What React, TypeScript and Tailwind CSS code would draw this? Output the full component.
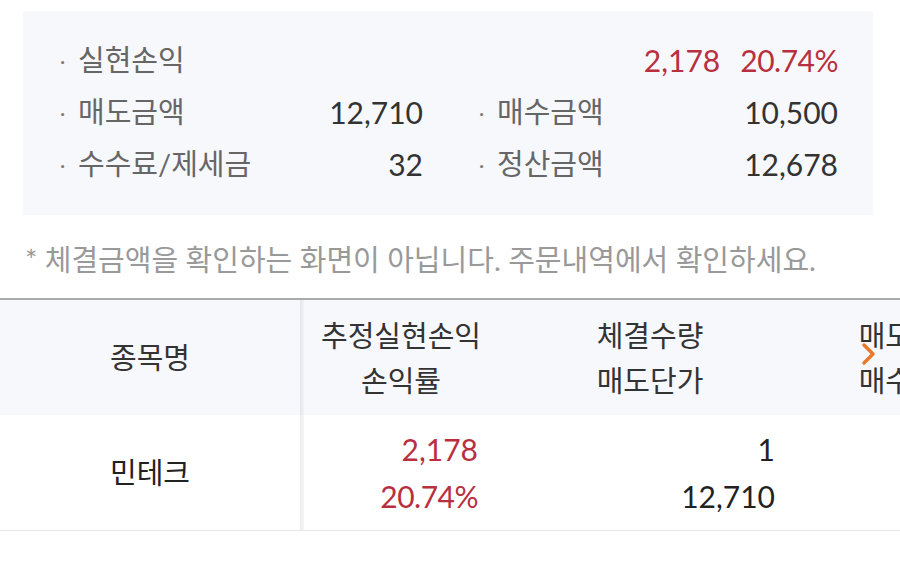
const font = { fontFamily: 'Lato, "Noto Sans CJK KR", sans-serif' };

function SummaryItem({ label, value }: { label: string; value: React.ReactNode }) {
  return (
    <div className="flex items-center h-[52px]">
      <span className="w-[18px] text-[#777] text-[20px]">·</span>
      <span className="text-[#666]">{label}</span>
      <span className="ml-auto text-[#333] text-[30px]">{value}</span>
    </div>
  );
}

export default function App() {
  return (
    <div className="w-[900px] h-[568px] bg-white overflow-hidden text-[29px]" style={font}>
      <div className="pt-[11px] px-[23px]">
        <div className="bg-[#f7f8fc] w-[850px] pt-[23px] pb-[25px] pl-[37px] pr-[35px]">
          <div className="flex items-center h-[52px]">
            <span className="w-[18px] text-[#777] text-[20px]">·</span>
            <span className="text-[#666]">실현손익</span>
            <span className="ml-auto text-[#b8303f] text-[30px]">2,178</span>
            <span className="ml-[20px] text-[#b8303f] text-[30px] tracking-[-0.5px]">20.74%</span>
          </div>
          <div className="grid grid-cols-[363px_1fr] gap-x-[56px]">
            <SummaryItem label="매도금액" value="12,710" />
            <SummaryItem label="매수금액" value="10,500" />
            <SummaryItem label="수수료/제세금" value="32" />
            <SummaryItem label="정산금액" value="12,678" />
          </div>
        </div>
      </div>

      <p className="mt-[27px] pl-[25px] text-[#999] leading-[36px] whitespace-nowrap">
        * 체결금액을 확인하는 화면이 아닙니다. 주문내역에서 확인하세요.
      </p>

      <div className="relative mt-[20px] border-t-2 border-[#aaaaaa] w-[1100px]">
        <div className="flex bg-[#f7f8fc] h-[115px] text-[#333]">
          <div className="w-[300px] flex items-center justify-center">종목명</div>
          <div className="w-[4px] bg-gradient-to-r from-[#e4e5ea] to-[#f2f3f7]" />
          <div className="w-[194px] flex flex-col items-center justify-center leading-[45px]">
            <span>추정실현손익</span>
            <span>손익률</span>
          </div>
          <div className="w-[304px] flex flex-col items-center justify-center leading-[45px]">
            <span>체결수량</span>
            <span>매도단가</span>
          </div>
          <div className="w-[220px] flex flex-col items-center justify-center leading-[45px]">
            <span>매도금액</span>
            <span>매수금액</span>
          </div>
        </div>
        <div className="flex h-[116px] border-b border-[#e6e6e6] text-[#222]">
          <div className="w-[300px] flex items-center justify-center">민테크</div>
          <div className="w-[4px] bg-gradient-to-r from-[#ececef] to-[#f7f7f9]" />
          <div className="w-[194px] flex flex-col items-end justify-center pr-[20px] leading-[47px] text-[30px] text-[#b8303f]">
            <span>2,178</span>
            <span className="tracking-[-0.5px]">20.74%</span>
          </div>
          <div className="w-[304px] flex flex-col items-end justify-center pr-[27px] leading-[47px] text-[30px]">
            <span>1</span>
            <span>12,710</span>
          </div>
          <div className="w-[220px] flex flex-col items-end justify-center pr-[28px] leading-[47px] text-[30px]">
            <span>12,710</span>
            <span>10,500</span>
          </div>
        </div>
        <svg
          className="absolute left-[860px] top-[42px]"
          width="18"
          height="24"
          viewBox="0 0 18 24"
          fill="none"
        >
          <path d="M4 3l9 9-9 9" stroke="#e8792b" strokeWidth="3.5" strokeLinecap="round" strokeLinejoin="round" />
        </svg>
      </div>
    </div>
  );
}
